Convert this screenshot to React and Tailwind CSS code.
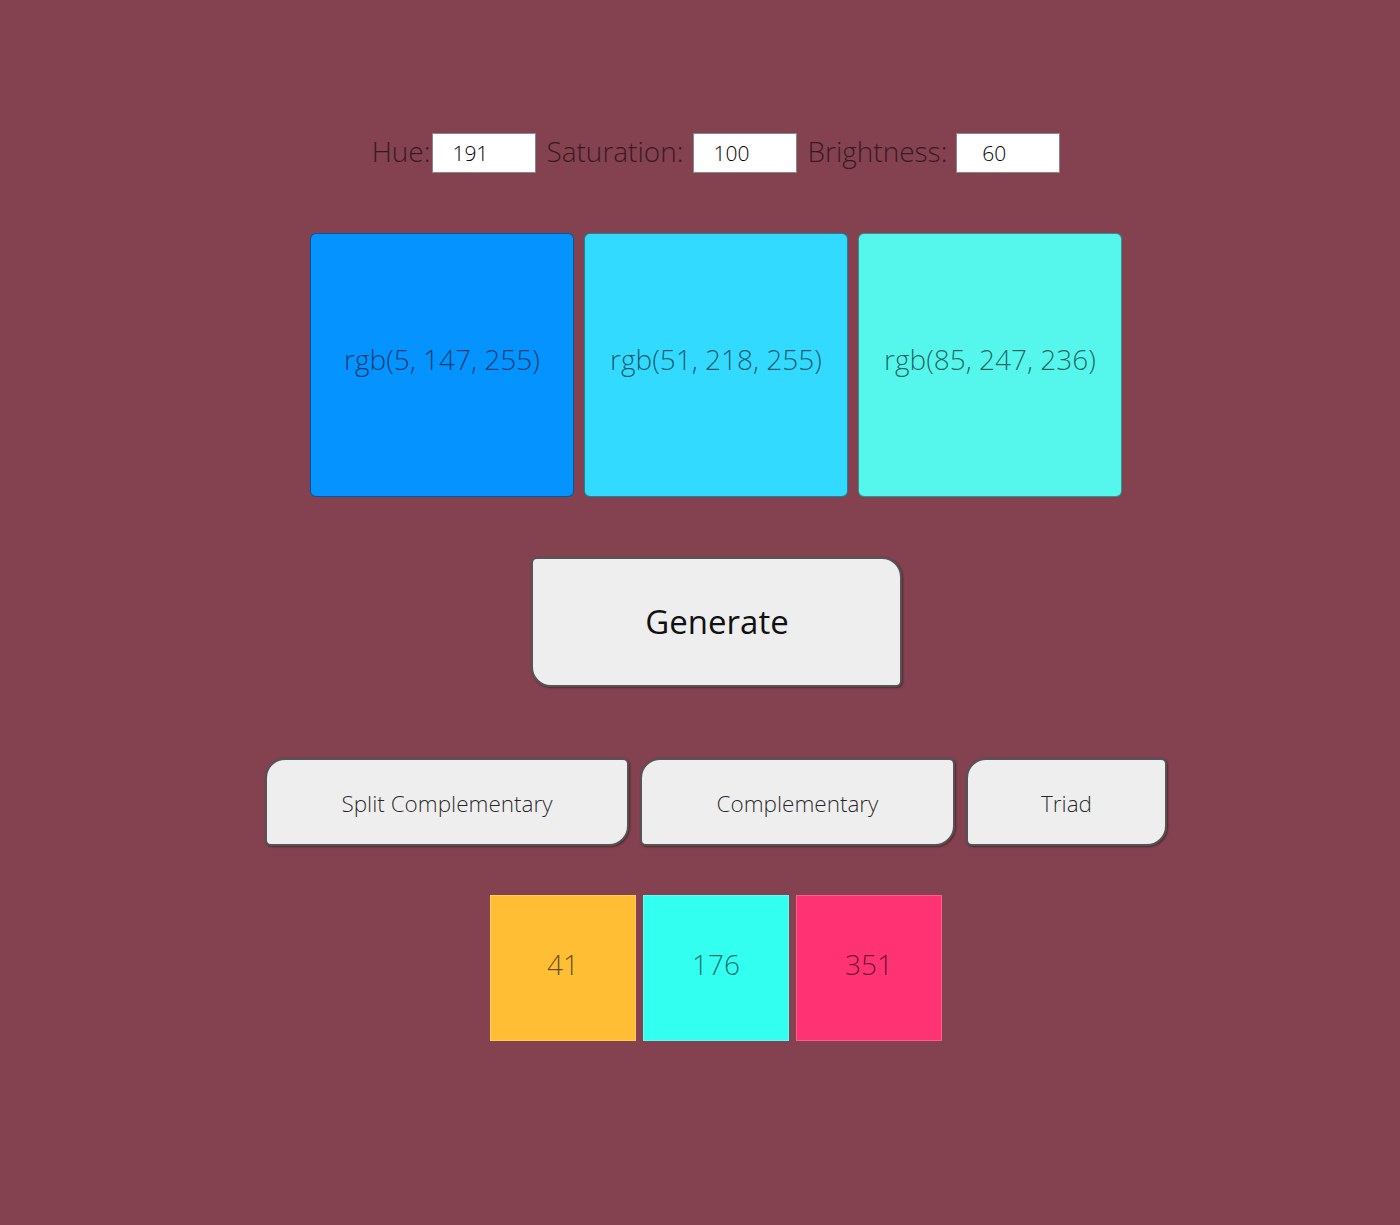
import React from "react";

const font = { fontFamily: '"Open Sans", "Liberation Sans", sans-serif' };

export default function App() {
  const boxes = [
    { bg: "bg-[rgb(5,147,255)]", label: "rgb(5, 147, 255)" },
    { bg: "bg-[rgb(51,218,255)]", label: "rgb(51, 218, 255)" },
    { bg: "bg-[rgb(85,247,236)]", label: "rgb(85, 247, 236)" },
  ];
  const hues = [
    { bg: "bg-[#ffbe33]", label: "41" },
    { bg: "bg-[#33fff1]", label: "176" },
    { bg: "bg-[#ff3373]", label: "351" },
  ];
  return (
    <div
      className="w-full min-h-[1225px] bg-[#84414f] font-light text-black/60 pl-[32px] flex flex-col items-center"
      style={font}
    >
      <div className="mt-[133px] flex items-center h-[40px] text-[28px] leading-none">
        <span className="pb-[4px]">Hue:</span>
        <input
          readOnly
          value="191"
          className="ml-[2px] w-[104px] h-[40px] bg-white border border-[#888] pl-[19px] text-[21px] font-light text-black outline-none"
          style={font}
        />
        <span className="ml-[10px] pb-[4px]">Saturation:</span>
        <input
          readOnly
          value="100"
          className="ml-[10px] w-[104px] h-[40px] bg-white border border-[#888] pl-[19px] text-[21px] font-light text-black outline-none"
          style={font}
        />
        <span className="ml-[10px] pb-[4px]">Brightness:</span>
        <input
          readOnly
          value="60"
          className="ml-[9px] w-[104px] h-[40px] bg-white border border-[#888] pl-[25px] text-[21px] font-light text-black outline-none"
          style={font}
        />
      </div>

      <div className="mt-[60px] flex gap-[10px]">
        {boxes.map((b) => (
          <div
            key={b.label}
            className={`${b.bg} w-[264px] h-[264px] rounded-[6px] border border-black/40 flex items-center justify-center text-[28px] pb-[13px]`}
          >
            {b.label}
          </div>
        ))}
      </div>

      <button
        className="mt-[60px] w-[371px] h-[130px] bg-[#eeeeee] border-2 border-[#555] rounded-tl-[6px] rounded-br-[6px] rounded-tr-[20px] rounded-bl-[20px] text-[33px] font-normal text-[#111] shadow-[1px_1px_2px_rgba(0,0,0,0.4)] pl-[2px]"
        style={font}
      >
        Generate
      </button>

      <div className="mt-[71px] flex gap-[11px]">
        {[
          { w: "w-[364px]", t: "Split Complementary" },
          { w: "w-[315px]", t: "Complementary" },
          { w: "w-[201px]", t: "Triad" },
        ].map((o) => (
          <button
            key={o.t}
            className={`${o.w} h-[88px] bg-[#eeeeee] border-2 border-[#555] rounded-tl-[20px] rounded-br-[20px] rounded-tr-[6px] rounded-bl-[6px] text-[22.5px] font-light text-black/85 shadow-[1px_1px_2px_rgba(0,0,0,0.4)] pt-[3px]`}
            style={font}
          >
            {o.t}
          </button>
        ))}
      </div>

      <div className="mt-[49px] flex gap-[7px]">
        {hues.map((h) => (
          <div
            key={h.label}
            className={`${h.bg} w-[146px] h-[146px] border border-white/20 flex items-center justify-center text-[28px] pb-[8px]`}
          >
            {h.label}
          </div>
        ))}
      </div>
    </div>
  );
}
